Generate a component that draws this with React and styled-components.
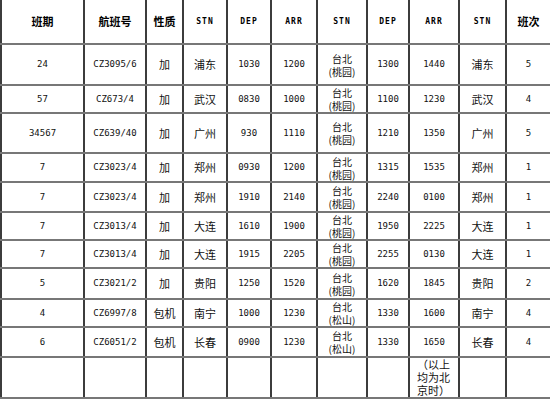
import React from "react";
import styled, { createGlobalStyle } from "styled-components";

const GlobalStyle = createGlobalStyle`
  html, body {
    margin: 0;
    padding: 0;
    background: #fff;
  }
  body {
    font-family: "DejaVu Sans Mono", "Noto Sans CJK SC", monospace;
    color: #111;
  }
`;

const widths = [83, 62, 37, 44, 44, 46, 50, 42, 50, 47, 45];
const rowHeights = [41, 28, 40, 29, 30, 28, 28, 31, 28, 30, 40];

const header = [
  { t: "班期", cjk: true },
  { t: "航班号", cjk: true },
  { t: "性质", cjk: true },
  { t: "STN" },
  { t: "DEP" },
  { t: "ARR" },
  { t: "STN" },
  { t: "DEP" },
  { t: "ARR" },
  { t: "STN" },
  { t: "班次", cjk: true },
];

const flights = [
  ["24", "CZ3095/6", "加", "浦东", "1030", "1200", "桃园", "1300", "1440", "浦东", "5"],
  ["57", "CZ673/4", "加", "武汉", "0830", "1000", "桃园", "1100", "1230", "武汉", "4"],
  ["34567", "CZ639/40", "加", "广州", "930", "1110", "桃园", "1210", "1350", "广州", "5"],
  ["7", "CZ3023/4", "加", "郑州", "0930", "1200", "桃园", "1315", "1535", "郑州", "1"],
  ["7", "CZ3023/4", "加", "郑州", "1910", "2140", "桃园", "2240", "0100", "郑州", "1"],
  ["7", "CZ3013/4", "加", "大连", "1610", "1900", "桃园", "1950", "2225", "大连", "1"],
  ["7", "CZ3013/4", "加", "大连", "1915", "2205", "桃园", "2255", "0130", "大连", "1"],
  ["5", "CZ3021/2", "加", "贵阳", "1250", "1520", "桃园", "1620", "1845", "贵阳", "2"],
  ["4", "CZ6997/8", "包机", "南宁", "1000", "1230", "松山", "1330", "1600", "南宁", "4"],
  ["6", "CZ6051/2", "包机", "长春", "0900", "1230", "松山", "1330", "1650", "长春", "4"],
];

const cjkCols = [2, 3, 9];

const Table = styled.table`
  width: 550px;
  table-layout: fixed;
  border-collapse: collapse;
`;

const Row = styled.tr`
  height: ${(p) => p.$h}px;
`;

const Cell = styled.td`
  padding: 0;
  text-align: center;
  vertical-align: middle;
  border-left: 2px solid #3c3c3c;
  border-right: 2px solid #3c3c3c;
  border-bottom: 2px solid #777;
  font-size: ${(p) => (p.$cjk ? "11px" : "9px")};
  font-family: ${(p) =>
    p.$cjk
      ? `"Noto Sans CJK SC", sans-serif`
      : `"DejaVu Sans Mono", "Noto Sans CJK SC", monospace`};
  line-height: 13px;
  white-space: nowrap;
  overflow: visible;
`;

const HeadCell = styled(Cell)`
  font-weight: bold;
  color: #000;
  font-size: ${(p) => (p.$cjk ? "11px" : "8px")};
  letter-spacing: ${(p) => (p.$cjk ? "0" : "1px")};
  font-family: ${(p) =>
    p.$cjk ? `"Noto Sans CJK SC", sans-serif` : `"DejaVu Sans Mono", monospace`};
`;

const Airport = styled.span`
  display: block;
  font-family: "Noto Sans CJK SC", sans-serif;
  font-size: 10px;
  line-height: 13px;
`;

const Note = styled.div`
  font-family: "Noto Sans CJK SC", sans-serif;
  font-size: 11px;
  line-height: 13px;
  white-space: normal;
  width: 34px;
  margin: 0 auto;
  text-align: left;
`;

function Taipei({ name }) {
  return (
    <>
      <Airport>台北</Airport>
      <Airport>({name})</Airport>
    </>
  );
}

export default function App() {
  return (
    <>
      <GlobalStyle />
      <Table>
        <colgroup>
          {widths.map((w, i) => (
            <col key={i} style={{ width: w }} />
          ))}
        </colgroup>
        <tbody>
          <Row $h={44}>
            {header.map((h, i) => (
              <HeadCell key={i} $cjk={h.cjk}>
                {h.t}
              </HeadCell>
            ))}
          </Row>
          {flights.map((f, r) => (
            <Row key={r} $h={rowHeights[r]}>
              {f.map((v, i) =>
                i === 6 ? (
                  <Cell key={i}>
                    <Taipei name={v} />
                  </Cell>
                ) : (
                  <Cell key={i} $cjk={cjkCols.includes(i)}>
                    {v}
                  </Cell>
                )
              )}
            </Row>
          ))}
          <Row $h={rowHeights[10]}>
            {widths.map((_, i) => (
              <Cell key={i}>{i === 8 ? <Note>（以上均为北京时）</Note> : null}</Cell>
            ))}
          </Row>
        </tbody>
      </Table>
    </>
  );
}
